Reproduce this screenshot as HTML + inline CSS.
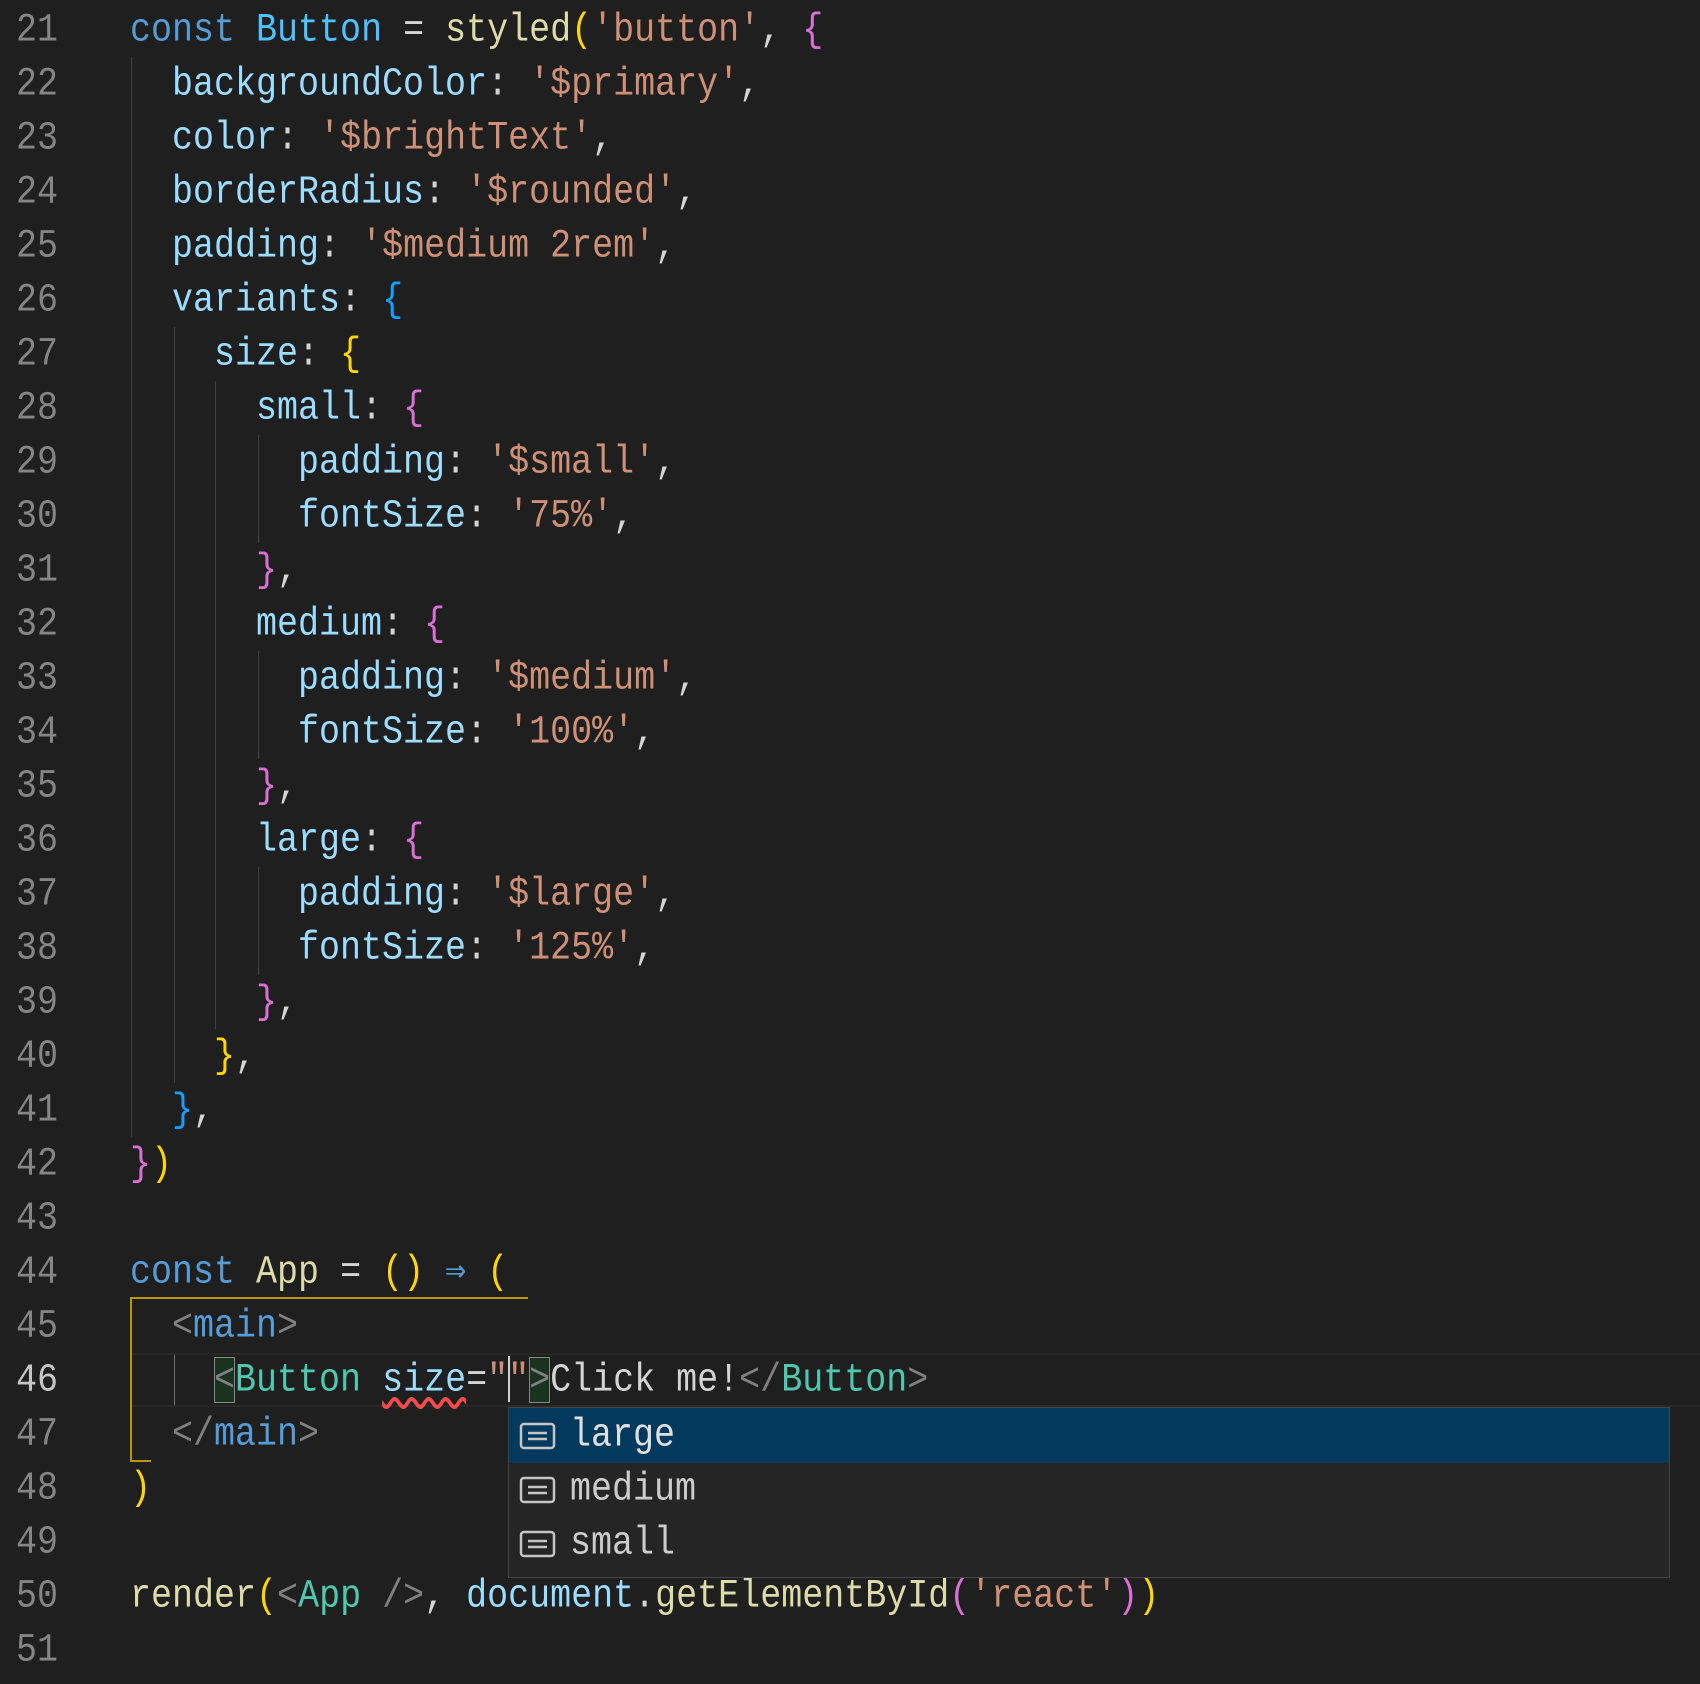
<!DOCTYPE html>
<html><head><meta charset="utf-8">
<style>
html,body{margin:0;padding:0;background:#1f1f1f;width:1700px;height:1684px;overflow:hidden;position:relative}
.l{position:absolute;left:0;height:54px;width:1700px;font-family:"Liberation Mono","DejaVu Sans Mono",monospace;font-size:35px;line-height:54px;white-space:pre;color:#d4d4d4}
.n{position:absolute;left:0;width:58px;text-align:right;color:#858585;display:inline-block;transform:scaleY(1.15)}
.c{position:absolute;left:130px;display:inline-block;transform:scaleY(1.15);transform-origin:0 50%}
.k{color:#569cd6}.cl{color:#4fc1ff}.f{color:#dcdcaa}.s{color:#ce9178}.p{color:#9cdcfe}.y{color:#ffd700}.m{color:#da70d6}.b{color:#179fff}.t{color:#4ec9b0}.g{color:#808080}
.gd{position:absolute;width:1px;background:#404040}
</style></head><body>
<div class="gd" style="left:131px;top:57px;height:1080px"></div>
<div class="gd" style="left:174px;top:327px;height:756px"></div>
<div class="gd" style="left:215px;top:381px;height:648px"></div>
<div class="gd" style="left:258px;top:435px;height:108px"></div>
<div class="gd" style="left:258px;top:651px;height:108px"></div>
<div class="gd" style="left:258px;top:867px;height:108px"></div>
<!-- current line -->
<div style="position:absolute;left:130px;top:1353px;width:1570px;height:50px;border-top:2px solid #282828;border-bottom:2px solid #282828"></div>
<div class="gd" style="left:174px;top:1355px;height:50px;background:#707070"></div>
<!-- bracket pair box -->
<div style="position:absolute;left:130px;top:1297px;width:398px;height:2px;background:#b89a00"></div>
<div style="position:absolute;left:130px;top:1297px;width:2px;height:165px;background:#b89a00"></div>
<div style="position:absolute;left:130px;top:1460px;width:21px;height:2px;background:#b89a00"></div>
<!-- bracket match boxes -->
<div style="position:absolute;left:214px;top:1357px;width:19px;height:44px;background:#1a3320;border:1px solid #888"></div>
<div style="position:absolute;left:529px;top:1357px;width:19px;height:44px;background:#1a3320;border:1px solid #888"></div>

<div class="l" style="top:3px"><span class="n">21</span><span class="c"><span class="k">const</span> <span class="cl">Button</span> = <span class="f">styled</span><span class="y">(</span><span class="s">'button'</span>, <span class="m">{</span></span></div>
<div class="l" style="top:57px"><span class="n">22</span><span class="c">  <span class="p">backgroundColor</span>: <span class="s">'$primary'</span>,</span></div>
<div class="l" style="top:111px"><span class="n">23</span><span class="c">  <span class="p">color</span>: <span class="s">'$brightText'</span>,</span></div>
<div class="l" style="top:165px"><span class="n">24</span><span class="c">  <span class="p">borderRadius</span>: <span class="s">'$rounded'</span>,</span></div>
<div class="l" style="top:219px"><span class="n">25</span><span class="c">  <span class="p">padding</span>: <span class="s">'$medium 2rem'</span>,</span></div>
<div class="l" style="top:273px"><span class="n">26</span><span class="c">  <span class="p">variants</span>: <span class="b">{</span></span></div>
<div class="l" style="top:327px"><span class="n">27</span><span class="c">    <span class="p">size</span>: <span class="y">{</span></span></div>
<div class="l" style="top:381px"><span class="n">28</span><span class="c">      <span class="p">small</span>: <span class="m">{</span></span></div>
<div class="l" style="top:435px"><span class="n">29</span><span class="c">        <span class="p">padding</span>: <span class="s">'$small'</span>,</span></div>
<div class="l" style="top:489px"><span class="n">30</span><span class="c">        <span class="p">fontSize</span>: <span class="s">'75%'</span>,</span></div>
<div class="l" style="top:543px"><span class="n">31</span><span class="c">      <span class="m">}</span>,</span></div>
<div class="l" style="top:597px"><span class="n">32</span><span class="c">      <span class="p">medium</span>: <span class="m">{</span></span></div>
<div class="l" style="top:651px"><span class="n">33</span><span class="c">        <span class="p">padding</span>: <span class="s">'$medium'</span>,</span></div>
<div class="l" style="top:705px"><span class="n">34</span><span class="c">        <span class="p">fontSize</span>: <span class="s">'100%'</span>,</span></div>
<div class="l" style="top:759px"><span class="n">35</span><span class="c">      <span class="m">}</span>,</span></div>
<div class="l" style="top:813px"><span class="n">36</span><span class="c">      <span class="p">large</span>: <span class="m">{</span></span></div>
<div class="l" style="top:867px"><span class="n">37</span><span class="c">        <span class="p">padding</span>: <span class="s">'$large'</span>,</span></div>
<div class="l" style="top:921px"><span class="n">38</span><span class="c">        <span class="p">fontSize</span>: <span class="s">'125%'</span>,</span></div>
<div class="l" style="top:975px"><span class="n">39</span><span class="c">      <span class="m">}</span>,</span></div>
<div class="l" style="top:1029px"><span class="n">40</span><span class="c">    <span class="y">}</span>,</span></div>
<div class="l" style="top:1083px"><span class="n">41</span><span class="c">  <span class="b">}</span>,</span></div>
<div class="l" style="top:1137px"><span class="n">42</span><span class="c"><span class="m">}</span><span class="y">)</span></span></div>
<div class="l" style="top:1191px"><span class="n">43</span></div>
<div class="l" style="top:1245px"><span class="n">44</span><span class="c"><span class="k">const</span> <span class="f">App</span> = <span class="y">()</span> <span class="k">⇒</span> <span class="y">(</span></span></div>
<div class="l" style="top:1299px"><span class="n">45</span><span class="c">  <span class="g">&lt;</span><span class="k">main</span><span class="g">&gt;</span></span></div>
<div class="l" style="top:1353px"><span class="n" style="color:#c6c6c6">46</span><span class="c">    <span class="g">&lt;</span><span class="t">Button</span> <span class="p" style="text-decoration:underline wavy #f14c4c;text-underline-offset:6px">size</span>=<span class="s">""</span><span class="g">&gt;</span>Click me!<span class="g">&lt;/</span><span class="t">Button</span><span class="g">&gt;</span></span></div>
<div style="position:absolute;left:508px;top:1356px;width:2px;height:46px;background:#d0d0d0"></div>
<div class="l" style="top:1407px"><span class="n">47</span><span class="c">  <span class="g">&lt;/</span><span class="k">main</span><span class="g">&gt;</span></span></div>
<div class="l" style="top:1461px"><span class="n">48</span><span class="c"><span class="y">)</span></span></div>
<div class="l" style="top:1515px"><span class="n">49</span></div>
<div class="l" style="top:1569px"><span class="n">50</span><span class="c"><span class="f">render</span><span class="y">(</span><span class="g">&lt;</span><span class="t">App</span> <span class="g">/&gt;</span>, <span class="p">document</span>.<span class="f">getElementById</span><span class="m">(</span><span class="s">'react'</span><span class="m">)</span><span class="y">)</span></span></div>
<div class="l" style="top:1623px"><span class="n">51</span></div>

<!-- suggest widget -->
<div style="position:absolute;left:508px;top:1407px;width:1160px;height:169px;background:#252526;border:1px solid #454545">
  <div style="position:absolute;left:0;top:0;width:1160px;height:55px;background:#04395e"></div>
  <div class="l" style="top:0;left:0;width:1100px;color:#e0e0e0"><span class="c" style="left:61px">large</span></div>
  <div class="l" style="top:54px;left:0;width:1100px;color:#cccccc"><span class="c" style="left:61px">medium</span></div>
  <div class="l" style="top:108px;left:0;width:1100px;color:#cccccc"><span class="c" style="left:61px">small</span></div>
  <svg style="position:absolute;left:10px;top:14px" width="38" height="136" viewBox="0 0 38 136" fill="none" stroke="#c5c5c5" stroke-width="2.5">
    <rect x="2" y="2" width="33" height="24" rx="3"/><path d="M9 11h19M9 17h19"/>
    <rect x="2" y="56" width="33" height="24" rx="3"/><path d="M9 65h19M9 71h19"/>
    <rect x="2" y="110" width="33" height="24" rx="3"/><path d="M9 119h19M9 125h19"/>
  </svg>
</div>
</body></html>
